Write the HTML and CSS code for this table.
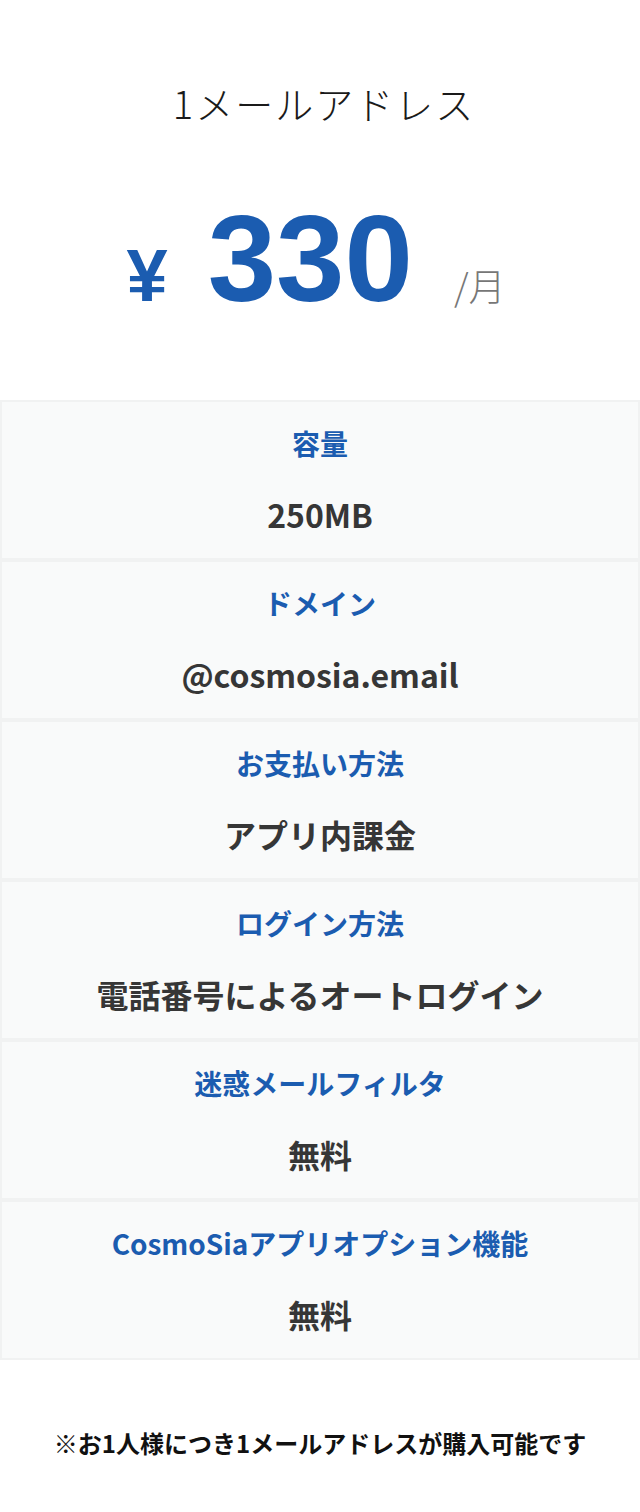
FILE: index.html
```html
<!DOCTYPE html>
<html lang="ja">
<head>
<meta charset="utf-8">
<title>1メールアドレス</title>
<link rel="stylesheet" href="styles.css">
</head>
<body>
<main class="plan">
  <header class="plan-head">
    <h1 class="plan-title">1メールアドレス</h1>
    <div class="price">
      <span class="yen">¥</span>
      <span class="amount">330</span>
      <span class="per">/月</span>
    </div>
  </header>
  <ul class="specs">
    <li class="spec"><span class="spec-label">容量</span><span class="spec-value">250MB</span></li>
    <li class="spec"><span class="spec-label">ドメイン</span><span class="spec-value">@cosmosia.email</span></li>
    <li class="spec"><span class="spec-label">お支払い方法</span><span class="spec-value">アプリ内課金</span></li>
    <li class="spec"><span class="spec-label">ログイン方法</span><span class="spec-value">電話番号によるオートログイン</span></li>
    <li class="spec"><span class="spec-label">迷惑メールフィルタ</span><span class="spec-value">無料</span></li>
    <li class="spec"><span class="spec-label">CosmoSiaアプリオプション機能</span><span class="spec-value">無料</span></li>
  </ul>
  <p class="note">※お1人様につき1メールアドレスが購入可能です</p>
</main>
</body>
</html>
```
FILE: styles.css
```css
* { box-sizing: border-box; }
html, body {
  margin: 0;
  padding: 0;
  background: #ffffff;
}
body {
  width: 640px;
  font-family: "Noto Sans CJK JP", "Noto Sans", sans-serif;
  color: #333333;
}
.plan {
  display: flex;
  flex-direction: column;
}
.plan-head {
  height: 400px;
  padding-top: 84px;
  display: flex;
  flex-direction: column;
  align-items: center;
}
.plan-title {
  margin: 0;
  font-size: 38px;
  line-height: 38px;
  font-weight: 300;
  color: #1a1a1a;
  letter-spacing: 2px;
  padding-left: 8px;
}
.price {
  margin-top: 75px;
  display: flex;
  align-items: baseline;
  justify-content: center;
  color: #1b5cb0;
  padding-right: 8px;
}
.yen {
  font-family: "Liberation Sans", Arial, sans-serif;
  font-weight: 700;
  font-size: 74px;
  line-height: 1;
  margin-right: 40px;
}
.amount {
  font-family: "Liberation Sans", Arial, sans-serif;
  font-weight: 700;
  font-size: 123px;
  line-height: 1;
  margin-right: 41px;
}
.per {
  font-size: 37px;
  line-height: 1;
  font-weight: 300;
  color: #777777;
}
.specs {
  list-style: none;
  margin: 0;
  padding: 0;
}
.spec {
  height: 160px;
  border: 2px solid #f1f2f2;
  background: #f9fafa;
  display: flex;
  flex-direction: column;
  align-items: center;
  padding-top: 20px;
}
.spec-label {
  font-size: 28px;
  line-height: 42px;
  font-weight: 700;
  color: #1b5cb0;
}
.spec-value {
  margin-top: 26px;
  font-size: 32px;
  line-height: 48px;
  font-weight: 700;
  color: #363636;
}
.note {
  margin: 65px 0 0;
  text-align: center;
  font-size: 24px;
  line-height: 36px;
  font-weight: 700;
  color: #111111;
}
```
